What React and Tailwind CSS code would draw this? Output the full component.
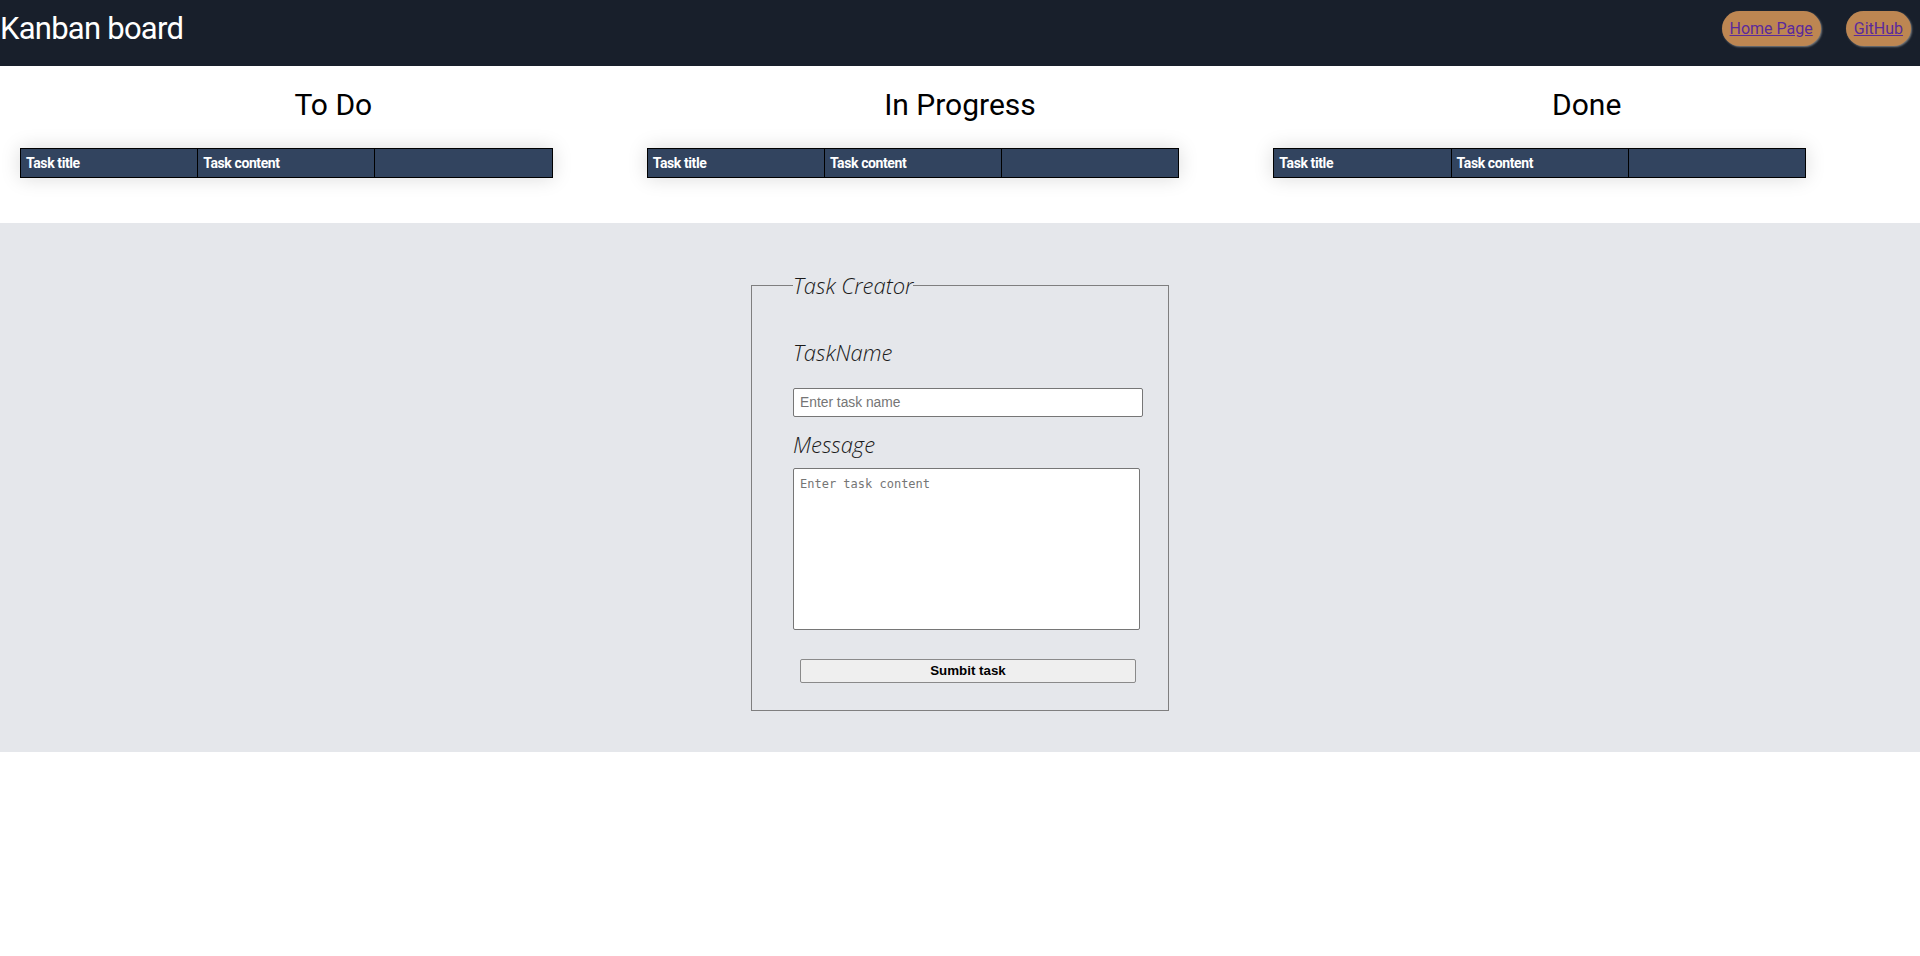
import React from "react";

const columns = ["To Do", "In Progress", "Done"];

function Column({ title }) {
    return (
        <section className="flex flex-col">
            <h2 className="mt-[21px] text-center text-[30px] leading-[36px] font-normal text-black">{title}</h2>
            <table className="mt-[25px] w-[85%] table-fixed border-collapse shadow-[0_0_20px_rgba(0,0,0,0.15)]">
                <thead>
                    <tr>
                        <th className="h-[29px] border border-black bg-[#32445f] px-[5px] text-left text-[14px] font-bold tracking-[-0.4px] text-white">Task title</th>
                        <th className="h-[29px] border border-black bg-[#32445f] px-[5px] text-left text-[14px] font-bold tracking-[-0.4px] text-white">Task content</th>
                        <th className="h-[29px] border border-black bg-[#32445f] px-[5px]"></th>
                    </tr>
                </thead>
                <tbody></tbody>
            </table>
        </section>
    );
}

export default function App() {
    return (
        <div className="min-h-screen bg-white font-['Roboto',sans-serif]">
            {/* top bar */}
            <header className="flex h-[66px] items-center justify-between bg-[#181f2b] pb-[9px]">
                <h1 className="text-[31px] leading-[38px] font-normal tracking-[-0.75px] text-white">Kanban board</h1>
                <nav className="flex gap-[25px] pr-[9px]">
                    <a href="#" className="flex h-[35px] items-center rounded-full bg-[#bd8652] px-[8px] text-[16px] text-[#5a2a9c] underline shadow-[1px_1px_2px_rgba(150,150,150,0.8)]">Home Page</a>
                    <a href="#" className="flex h-[35px] items-center rounded-full bg-[#bd8652] px-[8px] text-[16px] text-[#5a2a9c] underline shadow-[1px_1px_2px_rgba(150,150,150,0.8)]">GitHub</a>
                </nav>
            </header>

            <main className="grid grid-cols-3 px-5 pb-[45px]">
                {columns.map((c) => (
                    <Column key={c} title={c} />
                ))}
            </main>

            {/* task creator */}
            <div className="flex justify-center bg-gray-200 pt-[46px] pb-[41px]">
                <fieldset className="w-[418px] border border-[#7f7f7f] pl-[41px] pb-[27px] font-['Open_Sans',sans-serif] font-light italic text-[#1a1a1a]">
                    <legend className="text-[22px] leading-[33px]">Task Creator</legend>
                    <div className="flex flex-col items-start">
                        <label className="mt-[34px] text-[22px] leading-[33px]">TaskName</label>
                        <input
                            type="text"
                            placeholder="Enter task name"
                            className="mt-[19px] h-[29px] w-[350px] rounded-[2px] border border-[#767676] bg-white px-[6px] font-['Liberation_Sans',sans-serif] text-[13.8px] not-italic font-normal placeholder:text-[#757575]"
                        />
                        <label className="mt-[11px] text-[22px] leading-[33px]">Message</label>
                        <textarea
                            placeholder="Enter task content"
                            className="mt-[7px] h-[162px] w-[347px] resize-none rounded-[2px] border border-[#767676] bg-white p-[6px] font-['DejaVu_Sans_Mono',monospace] text-[12px] not-italic font-normal placeholder:text-[#757575]"
                        ></textarea>
                        <button className="ml-[7px] mt-[29px] h-[24px] w-[336px] rounded-[2px] border border-[#8a8a8a] bg-[#efefef] font-['Liberation_Sans',sans-serif] text-[13.33px] font-bold not-italic text-black">
                            Sumbit task
                        </button>
                    </div>
                </fieldset>
            </div>
        </div>
    );
}
